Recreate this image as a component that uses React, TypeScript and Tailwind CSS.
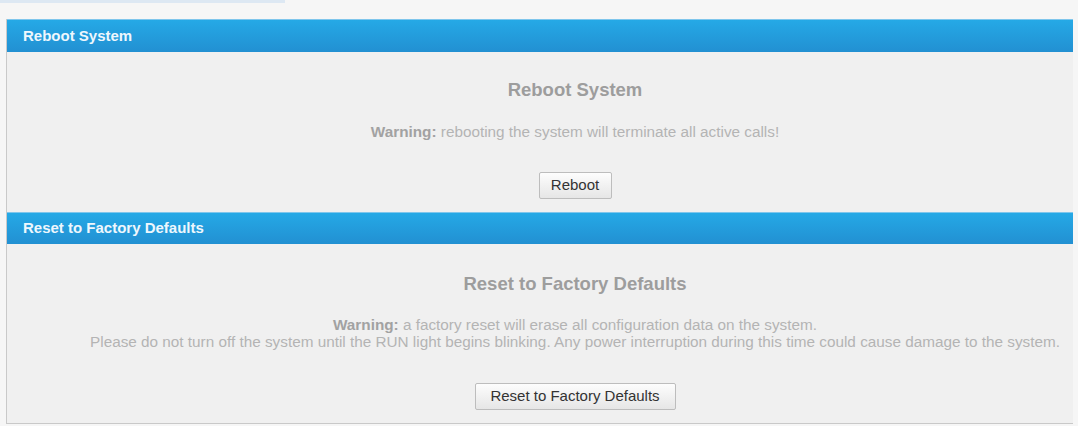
export default function App() {
  return (
    <div
      className="w-[1078px] h-[426px] bg-[#f6f6f6] overflow-hidden"
      style={{ fontFamily: '"Liberation Sans", Arial, sans-serif' }}
    >
      <div className="h-[3px] w-[285px] bg-[#dde8f3]" />
      <div className="pt-[16px] pl-[6px]">
        <div className="w-[1067px] border-l border-b border-[#c9c9c9]">
          <div className="h-[33px] flex items-center pl-[16px] bg-gradient-to-b from-[#25a9e6] to-[#2290d2] border-t border-[#7fc6ec] text-[#eef7fd] font-bold text-[15px]">
            Reboot System
          </div>
          <div className="h-[160px] bg-[#f0f0f0] flex flex-col items-center pl-[70px]">
            <div className="mt-[27px] text-[18.5px] font-bold text-[#9d9d9d] leading-[22px]">Reboot System</div>
            <div className="mt-[22px] text-[15.3px] text-[#b4b4b4] leading-[17px]">
              <span className="font-bold text-[#a2a2a2]">Warning:</span> rebooting the system will terminate all active calls!
            </div>
            <button className="mt-[32px] h-[27px] w-[73px] border border-[#bdbdbd] rounded-[2px] bg-gradient-to-b from-[#fdfdfd] to-[#e6e6e6] text-[15px] text-[#333]">
              Reboot
            </button>
          </div>
          <div className="h-[32px] flex items-center pl-[16px] bg-gradient-to-b from-[#25a9e6] to-[#2290d2] border-t border-[#7fc6ec] text-[#eef7fd] font-bold text-[15px]">
            Reset to Factory Defaults
          </div>
          <div className="h-[179px] bg-[#f0f0f0] flex flex-col items-center pl-[70px]">
            <div className="mt-[29px] text-[18.5px] font-bold text-[#9d9d9d] leading-[22px]">Reset to Factory Defaults</div>
            <div className="mt-[21px] text-[15.3px] text-[#b4b4b4] leading-[17px] text-center">
              <div>
                <span className="font-bold text-[#a2a2a2]">Warning:</span> a factory reset will erase all configuration data on the system.
              </div>
              <div className="whitespace-nowrap">
                Please do not turn off the system until the RUN light begins blinking. Any power interruption during this time could cause damage to the system.
              </div>
            </div>
            <button className="mt-[33px] h-[27px] w-[201px] border border-[#bdbdbd] rounded-[2px] bg-gradient-to-b from-[#fdfdfd] to-[#e6e6e6] text-[15px] text-[#333]">
              Reset to Factory Defaults
            </button>
          </div>
        </div>
      </div>
    </div>
  );
}
